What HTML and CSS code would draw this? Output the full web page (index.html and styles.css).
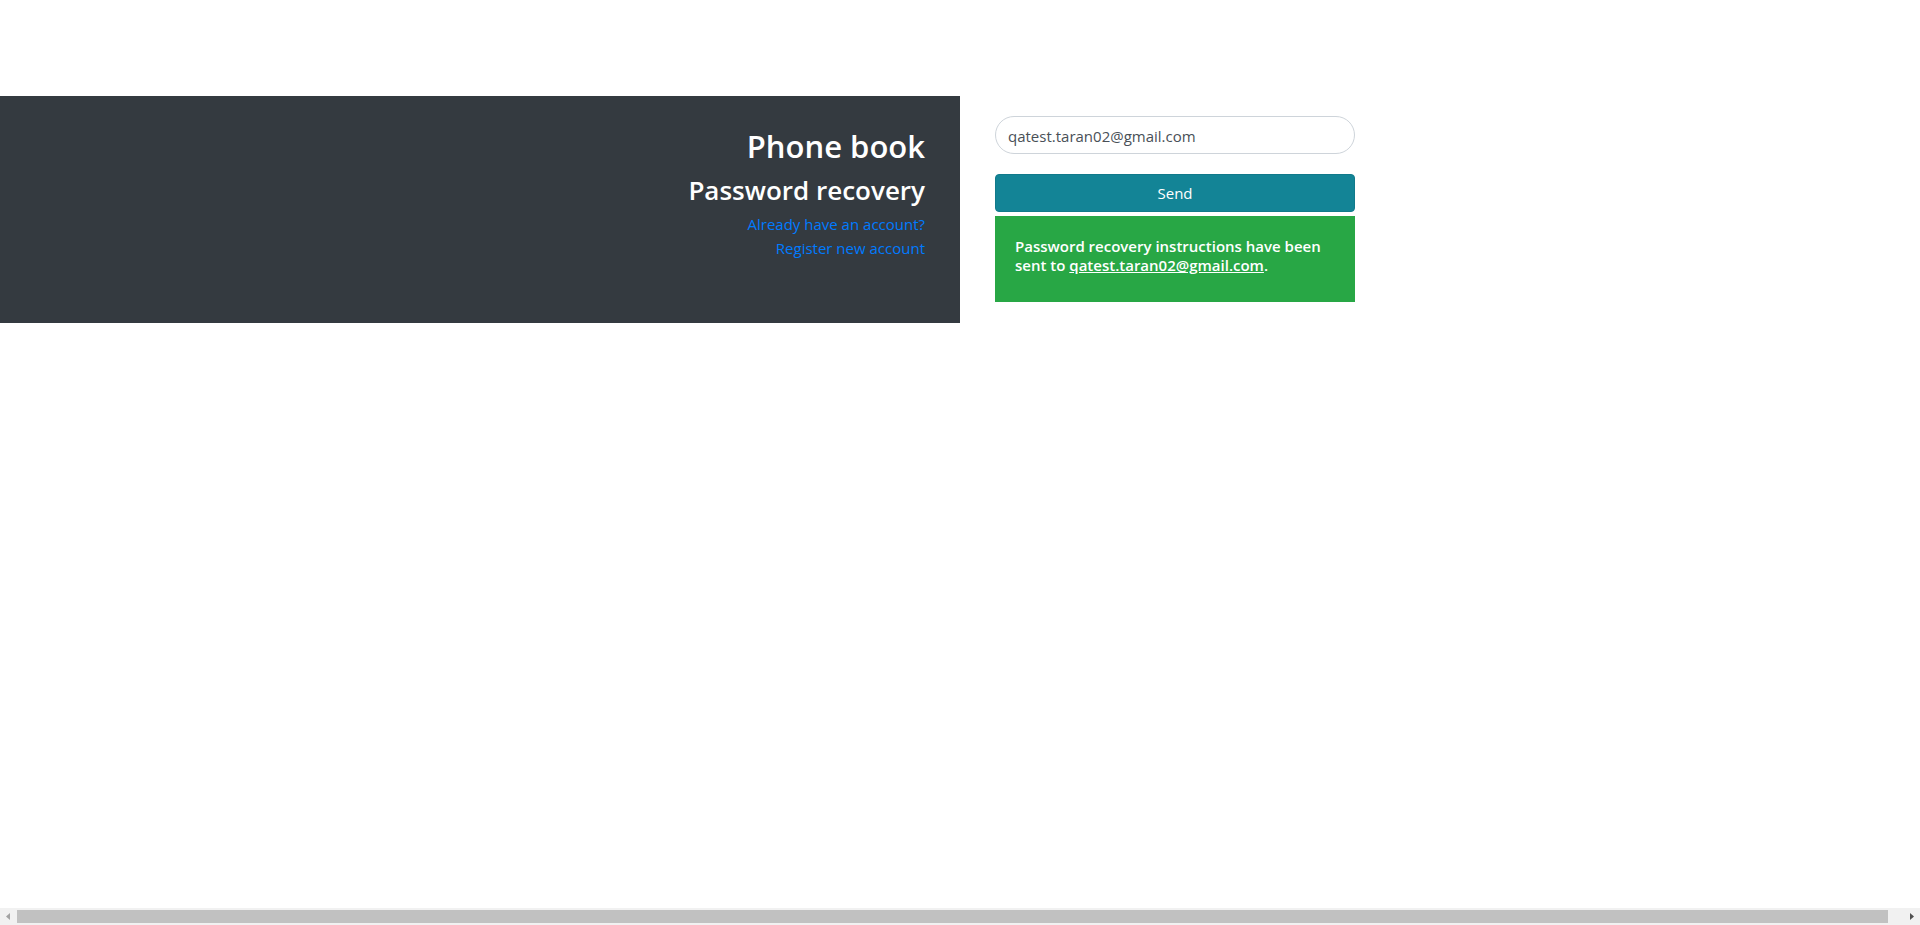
FILE: index.html
```html
<!DOCTYPE html>
<html lang="en">
<head>
<meta charset="utf-8">
<meta name="viewport" content="width=device-width, initial-scale=1">
<title>Phone book</title>
<link rel="stylesheet" href="styles.css">
</head>
<body class="page">
<main class="recovery">
  <section class="intro">
    <h1 class="intro-title">Phone book</h1>
    <h2 class="intro-subtitle">Password recovery</h2>
    <a class="intro-link" href="#login">Already have an account?</a>
    <a class="intro-link" href="#register">Register new account</a>
  </section>
  <section class="panel">
    <form class="form">
      <input class="form-email" type="email" aria-label="Email" value="qatest.taran02@gmail.com">
      <button class="form-send" type="button">Send</button>
      <div class="notice" role="status">
        <p class="notice-text">Password recovery instructions have been sent to <u>qatest.taran02@gmail.com</u>.</p>
      </div>
    </form>
  </section>
</main>
<div class="scrollbar" aria-hidden="true">
  <svg class="scrollbar-arrow" viewBox="0 0 17 17"><path d="M10 5v7L6 8.500z" fill="#a3a3a3"/></svg>
  <div class="scrollbar-track"><div class="scrollbar-thumb"></div></div>
  <svg class="scrollbar-arrow" viewBox="0 0 17 17"><path d="M7 5v7l4-3.500z" fill="#505050"/></svg>
</div>
</body>
</html>
```
FILE: styles.css
```css
* { box-sizing: border-box; }

.page {
  display: flex;
  flex-direction: column;
  min-height: 100vh;
  margin: 0;
  background: #fff;
  color: #212529;
  font: 400 15px/24px "Open Sans", "Noto Sans", sans-serif;
}

.recovery {
  display: grid;
  grid-template-columns: 1fr 1fr;
  margin: 96px 0 auto;
}

.intro {
  display: flex;
  flex-direction: column;
  align-items: flex-end;
  padding: 31px 35px;
  background: #343a40;
  color: #fff;
}

.intro-title,
.intro-subtitle {
  margin: 0 0 8px;
  font-weight: 600;
}

.intro-title { font-size: 31px; line-height: 38px; }
.intro-subtitle { margin-bottom: 5px; font-size: 26px; line-height: 34px; }

.intro-link {
  color: #007bff;
  text-decoration: none;
}

.panel { padding: 20px 35px 21px; }

.form {
  display: flex;
  flex-direction: column;
  max-width: 360px;
}

.form-email {
  height: 38px;
  margin: 0 0 20px;
  padding: 7px 12px 5px;
  border: 1px solid #ced4da;
  border-radius: 20px;
  background: #fff;
  color: #495057;
  font: inherit;
}

.form-send {
  height: 38px;
  margin: 0 0 4px;
  padding: 6px 12px;
  border: 1px solid #117a8b;
  border-radius: 4px;
  background: #138496;
  color: #fff;
  font: inherit;
}

.notice {
  padding: 21px 20px 27px;
  background: #28a745;
  color: #fff;
}

.notice-text {
  margin: 0;
  font-weight: 600;
  line-height: 19px;
}

.scrollbar {
  display: flex;
  height: 17px;
  background: #f1f1f1;
}

.scrollbar-arrow {
  flex: none;
  width: 17px;
  height: 17px;
}

.scrollbar-track {
  flex: 1;
  padding: 2px 0;
}

.scrollbar-thumb {
  width: 99.2%;
  height: 13px;
  background: #c1c1c1;
}
```
